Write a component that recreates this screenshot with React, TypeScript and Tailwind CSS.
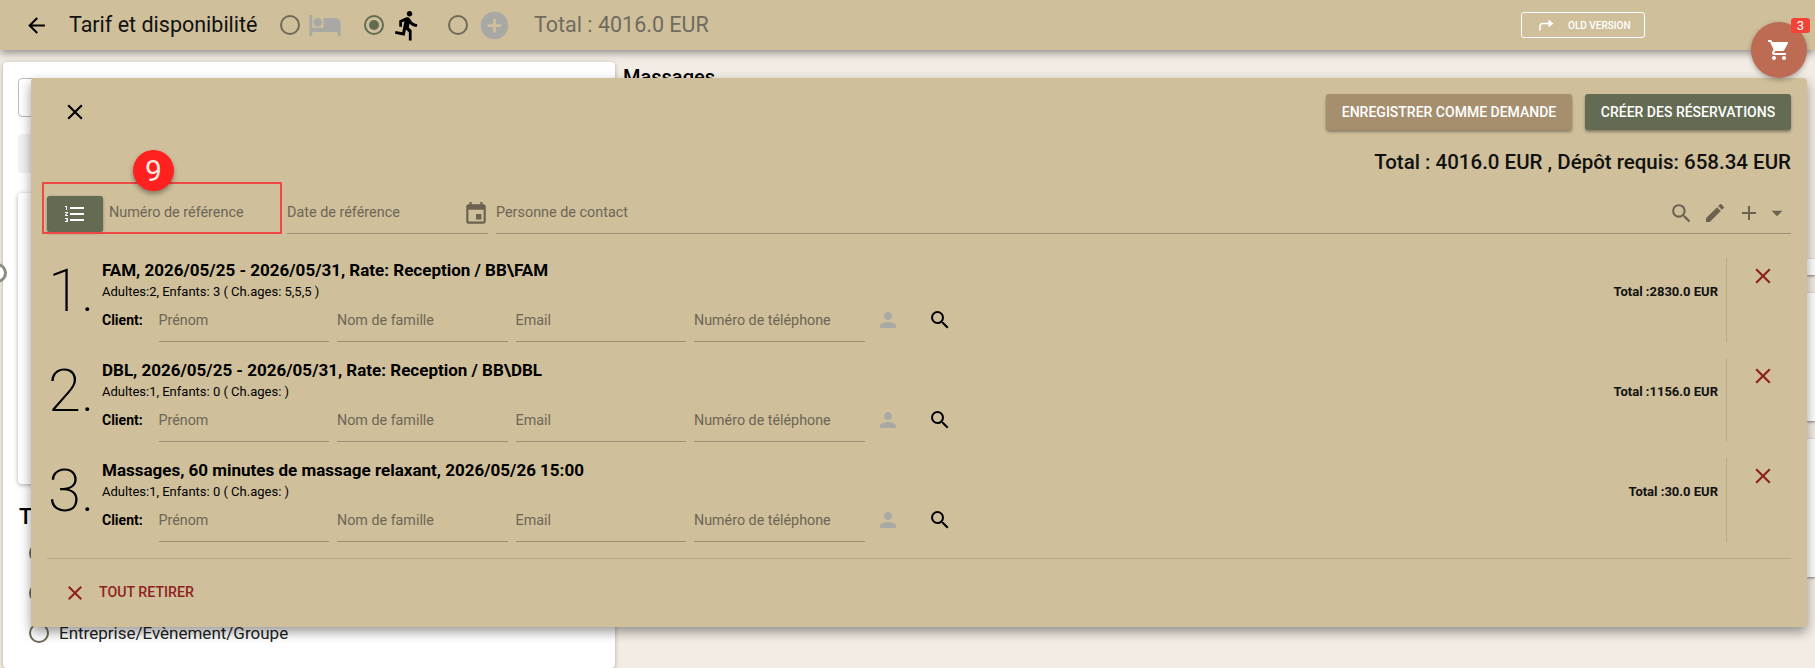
import {
  MdAdd,
  MdAddCircle,
  MdArrowBack,
  MdArrowDropDown,
  MdClose,
  MdDirectionsRun,
  MdEdit,
  MdEvent,
  MdFormatListNumbered,
  MdHotel,
  MdPerson,
  MdSearch,
  MdShoppingCart
} from "react-icons/md";

const items = [
  {
    n: "1.",
    title: "FAM, 2026/05/25 - 2026/05/31, Rate: Reception / BB\\FAM",
    sub: "Adultes:2, Enfants: 3 ( Ch.ages: 5,5,5 )",
    total: "Total :2830.0 EUR"
  },
  {
    n: "2.",
    title: "DBL, 2026/05/25 - 2026/05/31, Rate: Reception / BB\\DBL",
    sub: "Adultes:1, Enfants: 0 ( Ch.ages: )",
    total: "Total :1156.0 EUR"
  },
  {
    n: "3.",
    title: "Massages, 60 minutes de massage relaxant, 2026/05/26 15:00",
    sub: "Adultes:1, Enfants: 0 ( Ch.ages: )",
    total: "Total :30.0 EUR"
  }
];

const fields = ["Prénom", "Nom de famille", "Email", "Numéro de téléphone"];

const Radio = ({ checked }: { checked?: boolean }) => (
  <span
    className={`flex h-5 w-5 shrink-0 items-center justify-center rounded-full border-2 ${
      checked ? "border-[#636b53]" : "border-[#6f6a58]"
    }`}
  >
    {checked && <span className="h-2.5 w-2.5 rounded-full bg-[#636b53]" />}
  </span>
);

const Header = () => (
  <header className="relative flex h-[50px] items-center bg-[#cfbf9b] pl-6 shadow-[0_3px_8px_rgba(0,0,0,0.4)]">
    <MdArrowBack className="shrink-0 text-[25px] text-black" />
    <h1 className="ml-5 w-[188px] whitespace-nowrap text-[21.5px] leading-6 text-[#111]">
      Tarif et disponibilité
    </h1>
    <span className="ml-[23px]">
      <Radio />
    </span>
    <MdHotel className="ml-2 shrink-0 text-[34px] text-[#a8a8a4]" />
    <span className="ml-[22px]">
      <Radio checked />
    </span>
    <MdDirectionsRun className="ml-[7px] shrink-0 text-[33px] text-black" />
    <span className="ml-6">
      <Radio />
    </span>
    <MdAddCircle className="ml-2.5 shrink-0 text-[33px] text-[#a8a8a4]" />
    <span className="ml-[23px] text-[21.5px] text-[#6f6b5f]">
      Total : 4016.0 EUR
    </span>
    <button className="ml-auto mr-[170px] flex h-[26px] w-[124px] items-center rounded-[3px] border border-white pl-[17px] text-[10px] font-medium text-white">
      <svg width="15" height="12" viewBox="0 0 15 12" fill="none">
        <path d="M1 11.5V7.5Q1 4.5 4 4.5H10" stroke="white" strokeWidth="1.6" />
        <path d="M9.5 0.5L14.5 4.5L9.5 8.5Z" fill="white" />
      </svg>
      <span className="ml-3.5">OLD VERSION</span>
    </button>
  </header>
);

const Background = () => (
  <div className="flex h-[618px] bg-[#f3ece4] pl-[3px]">
    <div className="mt-3 flex h-[606px] w-[612px] flex-col rounded bg-white px-[15px] pt-4 shadow-[0_1px_4px_rgba(0,0,0,0.3)]">
      <div className="h-[39px] rounded border border-[#bbb]" />
      <div className="mt-[17px] h-[39px] rounded bg-[#f1f1f1]" />
      <div className="mt-5 h-[291px] rounded bg-white shadow-[0_1px_4px_rgba(0,0,0,0.35)]" />
      <p className="ml-px mt-[19px] text-[22px] font-medium leading-7 text-black">T</p>
      <div className="mt-2.5 flex flex-col gap-4 pl-[11px] text-[17px] leading-6 text-[#222]">
        <span className="flex h-6 items-center gap-2.5">
          <Radio />
        </span>
        <span className="flex h-6 items-center gap-2.5">
          <Radio />
        </span>
        <span className="flex h-6 items-center gap-2.5">
          <Radio />
          Entreprise/Evènement/Groupe
        </span>
      </div>
    </div>
    <div className="ml-2 flex-1">
      <p className="mt-[13px] text-[20px] font-medium leading-7 text-black">Massages</p>
      <div className="ml-[1184px] mt-[168px] h-[16px] bg-white shadow-[0_1px_3px_rgba(0,0,0,0.5)]" />
      <div className="ml-[1184px] mt-[18px] h-[128px] bg-white shadow-[0_1px_3px_rgba(0,0,0,0.5)]" />
      <div className="ml-[1184px] mt-[18px] h-[138px] bg-white shadow-[0_1px_3px_rgba(0,0,0,0.5)]" />
    </div>
  </div>
);

const CartItem = ({ item }: { item: (typeof items)[number] }) => (
  <div className="flex h-[84px]">
    <div className="w-[55px] pl-px pt-px text-[60px] font-extralight leading-[64px] text-black">
      {item.n}
    </div>
    <div className="flex-1">
      <div className="text-[17px] font-bold leading-6 text-black">{item.title}</div>
      <div className="mt-[2px] text-[13px] leading-4 text-black">{item.sub}</div>
      <div className="flex items-start">
        <span className="w-[56.5px] pt-2.5 text-[14px] font-bold leading-5 text-black">
          Client:
        </span>
        <div className="flex gap-2">
          {fields.map((field) => (
            <div
              key={field}
              className="h-[42px] w-[170.5px] border-b border-[#9c8f73] pt-2.5 text-[14.3px] leading-5 text-[#6e6655]"
            >
              {field}
            </div>
          ))}
        </div>
        <MdPerson className="ml-[11px] mt-2 text-[24px] text-[#a8a8a4]" />
        <MdSearch className="ml-7 mt-2 text-[24px] text-black" />
      </div>
    </div>
    <div className="flex w-[292px] justify-end border-r border-[#b5a88b] pr-2 pt-[26px]">
      <span className="text-[13px] font-bold leading-4 text-[#111]">{item.total}</span>
    </div>
    <div className="flex w-[64px] justify-center pl-2 pt-[5px]">
      <MdClose className="text-[26px] text-[#8e1f1f]" />
    </div>
  </div>
);

const ReservationPanel = () => (
  <div className="absolute left-[31px] top-[78px] h-[549px] w-[1776px] rounded bg-[#cfbf9b] px-4 pt-4 shadow-[0_5px_12px_rgba(0,0,0,0.4)]">
    <div className="flex h-9 items-center">
      <MdClose className="ml-[15px] text-[26px] text-black" />
      <button className="ml-auto h-9 w-[246px] rounded-[3px] bg-[#a68f6f] text-[14px] font-medium text-white shadow-[0_2px_3px_rgba(0,0,0,0.35)]">
        ENREGISTRER COMME DEMANDE
      </button>
      <button className="ml-[13px] h-9 w-[206px] rounded-[3px] bg-[#636b53] text-[14px] font-medium text-white shadow-[0_2px_3px_rgba(0,0,0,0.35)]">
        CRÉER DES RÉSERVATIONS
      </button>
    </div>
    <div className="mt-[18px] text-right text-[20.5px] font-medium leading-7 text-[#111]">
      Total : 4016.0 EUR , Dépôt requis: 658.34 EUR
    </div>
    <div className="mt-5 flex h-[38px] items-stretch">
      <button className="flex h-9 w-14 items-center justify-center rounded-[3px] bg-[#636b53] text-white shadow-[0_1px_3px_rgba(0,0,0,0.35)]">
        <MdFormatListNumbered className="text-[24px]" />
      </button>
      <div className="ml-1.5 w-[178px] pt-[7px] text-[14.4px] leading-5 text-[#6e6655]">
        Numéro de référence
      </div>
      <div className="flex w-[201px] items-start justify-between border-b border-[#9c8f73] pt-[7px] text-[14.4px] leading-5 text-[#6e6655]">
        <span>Date de référence</span>
        <MdEvent className="mr-[-1px] mt-[-2px] text-[26px] text-[#6b6250]" />
      </div>
      <div className="ml-2 flex flex-1 items-start border-b border-[#9c8f73] pt-[7px] text-[14.4px] leading-5 text-[#6e6655]">
        <span>Personne de contact</span>
        <div className="ml-auto mt-[-3px] flex items-center pr-px text-[#6b6250]">
          <MdSearch className="text-[25px]" />
          <MdEdit className="ml-[9px] text-[24px]" />
          <MdAdd className="ml-2.5 text-[24px]" />
          <MdArrowDropDown className="ml-[3px] text-[26px]" />
        </div>
      </div>
    </div>
    <div className="mt-6 flex flex-col gap-4">
      {items.map((item) => (
        <CartItem key={item.n} item={item} />
      ))}
    </div>
    <div className="mt-4 border-t border-[#b5a88b]" />
    <div className="mt-[22px] flex items-center text-[#8e1f1f]">
      <MdClose className="ml-4 text-[24px]" />
      <span className="ml-3 text-[14.2px] font-medium">TOUT RETIRER</span>
    </div>
  </div>
);

export default function App() {
  return (
    <div className="relative h-[668px] w-[1815px] overflow-hidden font-['Roboto',sans-serif]">
      <Header />
      <Background />
      <ReservationPanel />

      {/* slider knob poking out on the left edge */}
      <div className="absolute left-[-13px] top-[263px] h-5 w-5 rounded-full border-[3px] border-[#8a8f7c] bg-white" />

      {/* annotation from the help doc */}
      <div className="absolute left-[42px] top-[182px] h-[52px] w-[240px] border-2 border-[#f04848]" />
      <div className="absolute left-[133px] top-[150px] flex h-[41px] w-[41px] items-center justify-center rounded-full bg-[#ff2020] text-[30px] text-[#f5e8e0] shadow-[0_3px_5px_rgba(0,0,0,0.35)]">
        9
      </div>

      <button className="absolute left-[1751px] top-[22px] flex h-14 w-14 items-center justify-center rounded-full bg-[#bd6b52] text-white shadow-[0_2px_5px_rgba(0,0,0,0.3)]">
        <MdShoppingCart className="text-[24px]" />
      </button>
      <span className="absolute left-[1791px] top-[18px] flex h-[15px] w-[19px] items-center justify-center rounded-[3px] bg-[#f44336] text-[13px] text-white">
        3
      </span>
    </div>
  );
}
